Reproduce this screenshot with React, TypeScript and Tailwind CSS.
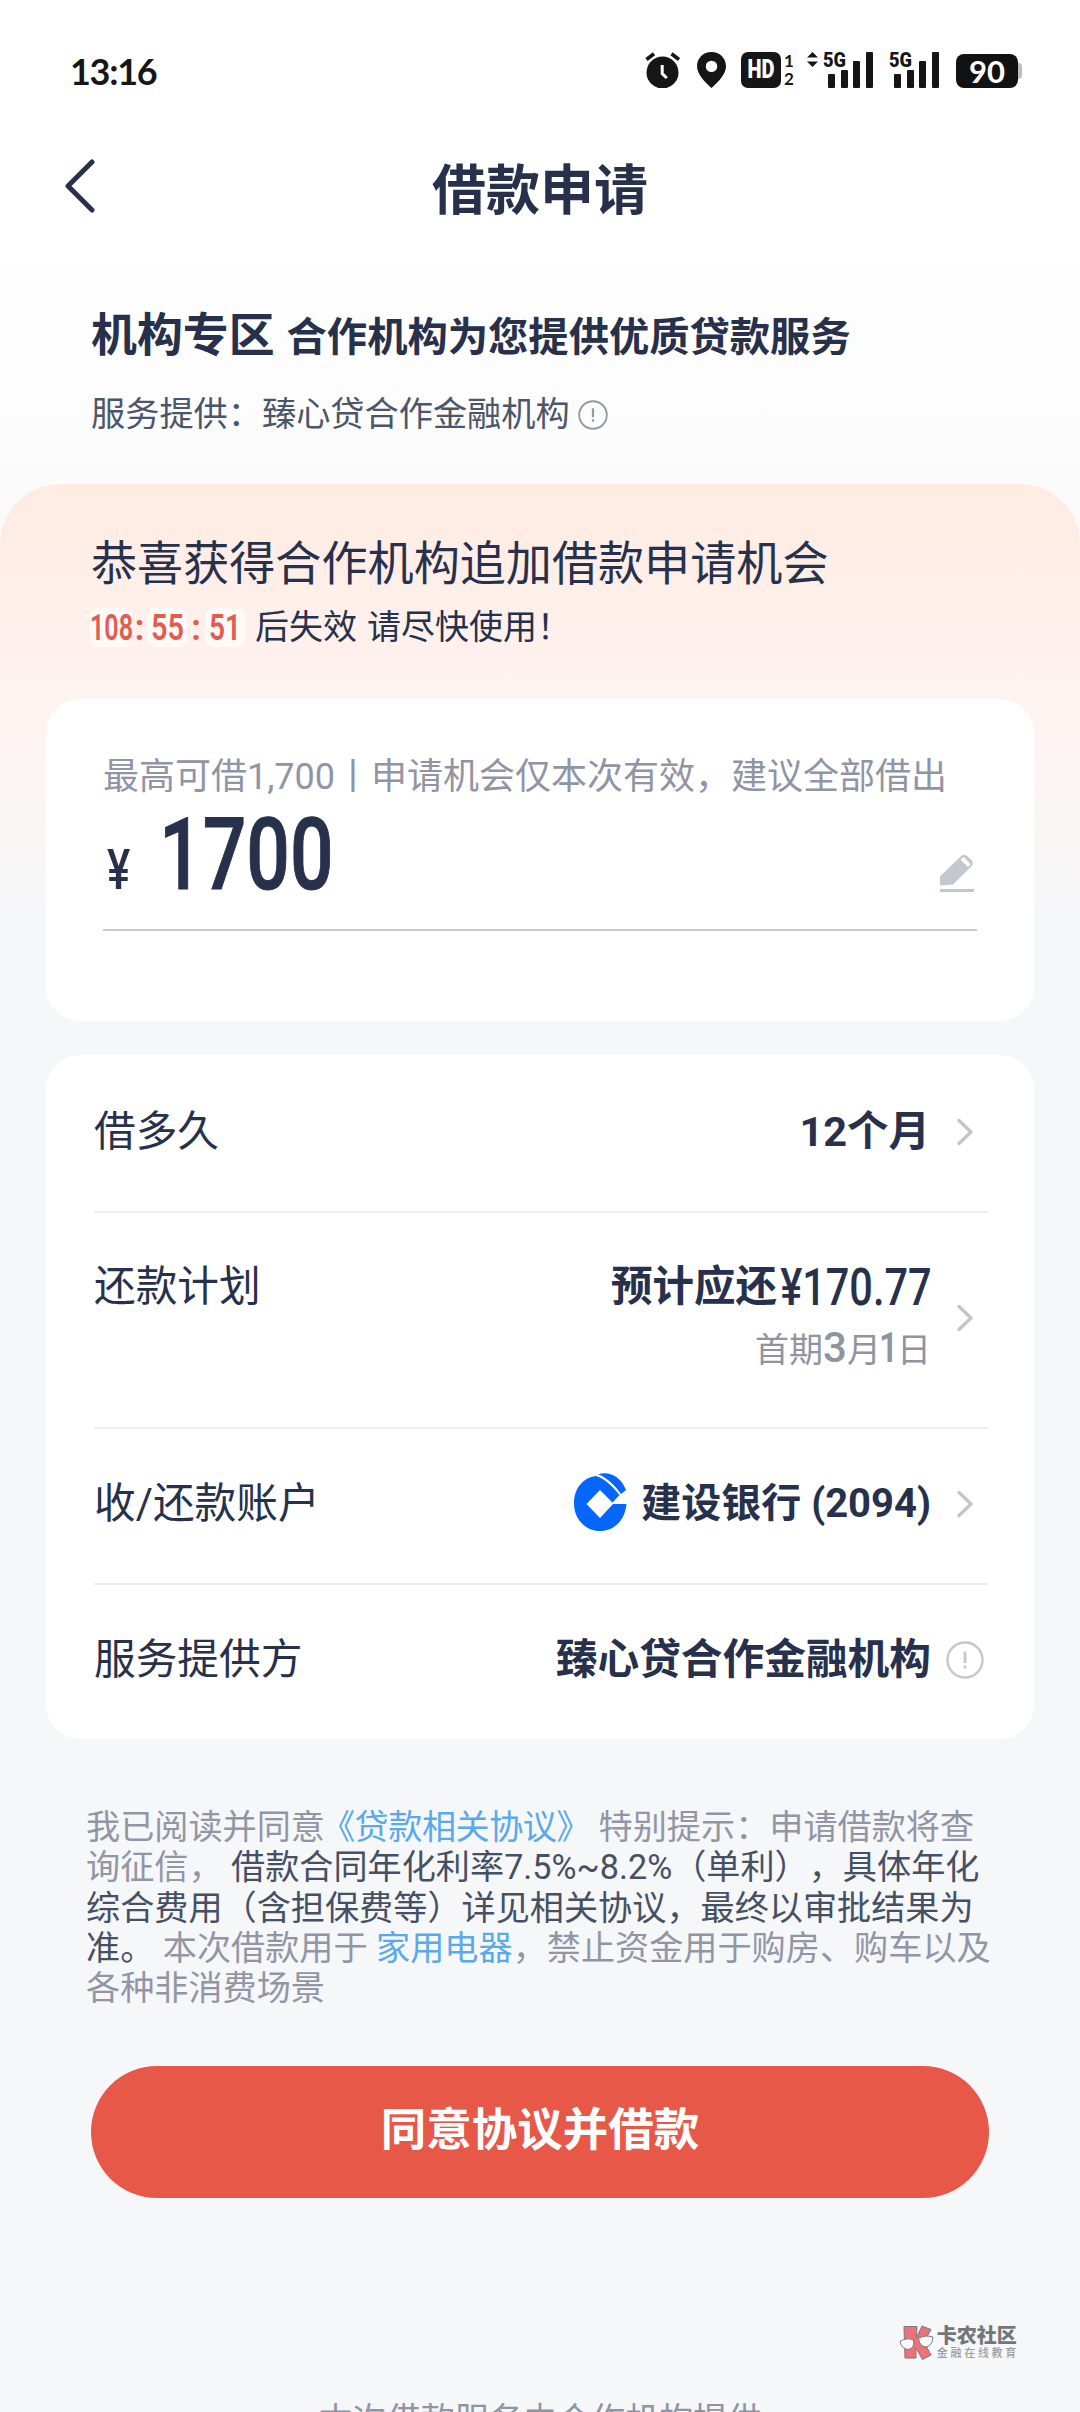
import type { ReactNode } from "react";
import clsx from "clsx";

const BARS = [
  { x: 5, y: 22 },
  { x: 18, y: 18 },
  { x: 30, y: 9 },
  { x: 43, y: 0 },
];

function AlarmIcon() {
  return (
    <svg width="36" height="36" viewBox="0 0 36 36" fill="#161616">
      <circle cx="17.5" cy="20.5" r="16" />
      <path d="M1.5 7.5 9 1.8M34 7.5 26.500 1.800" stroke="#161616" strokeWidth="3.600" />
      <path d="M17.200 13v8.500l4.600 4.500" stroke="#fff" strokeWidth="3" fill="none" />
    </svg>
  );
}

function PinIcon() {
  return (
    <svg width="30" height="36" viewBox="0 0 30 36" fill="#161616">
      <path
        fillRule="evenodd"
        d="M14.500 0C6.300 0 0 6.200 0 14c0 8.500 8 16 14.500 22C21 30 29 22.500 29 14 29 6.200 22.700 0 14.500 0Zm0 8.700a5.700 5.700 0 1 1 0 11.400 5.700 5.700 0 0 1 0-11.400Z"
      />
    </svg>
  );
}

function Signal() {
  return (
    <svg width="51" height="36" viewBox="0 0 51 36" fill="#161616" className="overflow-visible">
      <text x="0" y="14.500" fontSize="20.500" fontWeight="900" textLength="23" lengthAdjust="spacingAndGlyphs" className="font-['Roboto',sans-serif]">
        5G
      </text>
      {BARS.map((b) => (
        <rect key={b.x} x={b.x} y={b.y} width="7" height={36 - b.y} rx="1" />
      ))}
    </svg>
  );
}

function StatusBar() {
  return (
    <div className="flex h-[140px] items-start justify-between pt-[52px] pr-[58px] pl-[70px] text-[#161616]">
      <span className="font-['Lato','Noto_Sans_CJK_SC',sans-serif] text-[36px] leading-[38px] font-bold tracking-[-1.3px]">
        13:16
      </span>
      <div className="flex h-9 items-start">
        <AlarmIcon />
        <span className="w-4" />
        <PinIcon />
        <span className="w-3.5" />
        <div className="flex h-9 w-10 items-center justify-center rounded-[7px] bg-[#161616] font-['Roboto',sans-serif] text-[25px] font-black text-white">
          <span className="scale-x-[0.8]">HD</span>
        </div>
        <div className="ml-[3px] flex h-9 w-[10px] flex-col justify-between font-['Lato',sans-serif] text-[17px] leading-[18px] font-bold">
          <span>1</span>
          <span>2</span>
        </div>
        <svg width="11" height="15" viewBox="0 0 11 15" fill="#161616" className="mr-[5px] ml-[13px]">
          <path d="M5.500 0 11 5.500H0ZM5.500 15 11 9.500H0Z" />
        </svg>
        <Signal />
        <span className="w-[15px]" />
        <Signal />
        <span className="w-4" />
        <div className="mt-0.5 flex items-center">
          <div className="flex h-[34px] w-[62px] items-center justify-center rounded-[8px] bg-[#121212] font-['Lato',sans-serif] text-[31px] font-bold text-white">
            90
          </div>
          <span className="h-4 w-1 rounded-r-[4px] bg-[#bdbdbd]" />
        </div>
      </div>
    </div>
  );
}

function InfoIcon({ size, color }: { size: number; color: string }) {
  return (
    <svg width={size} height={size} viewBox="0 0 38 38" fill="none" stroke={color} strokeWidth="2.400">
      <circle cx="19" cy="19" r="17.500" />
      <path d="M19 10.500v11.500M19 24.500v3" strokeWidth="2.800" />
    </svg>
  );
}

function Chevron() {
  return (
    <svg width="16" height="28" viewBox="0 0 16 28" fill="none" stroke="#c3c5c9" strokeWidth="3.300" strokeLinecap="round" strokeLinejoin="round">
      <path d="M2 2.500 14 14 2 25.500" />
    </svg>
  );
}

function CcbLogo() {
  return (
    <svg width="53" height="58" viewBox="0 0 53 58">
      <path
        fill="#0466fb"
        d="M22 3C9 4.500 0 15.500 0 30.500 0 46 11.500 58 26 58c14 0 25-10.500 26.500-27H39L26 45 12.500 31 26 17l12.500 12.500 7-7.500C40 15 31 5.500 22 3Z"
      />
      <path fill="#0466fb" d="M24 1.200C36-2.500 47.500 4.500 52 17l-5 4C41.500 13 32.500 4 24 1.200Z" />
    </svg>
  );
}

function PencilIcon() {
  return (
    <svg width="35" height="40" viewBox="0 0 35 40">
      <path fill="#c5c6cf" d="M0 31V23.500L21 3.200c2-2 4.500-2 6.500 0l3.800 3.700c2 2 2 4.500 0 6.500L13 31.500 2.500 32.500Q0 33 0 31Z" />
      <path fill="#fff" d="m20.500 6.500 3.200-2.500 6.800 7-2.300 3.300Z" />
      <path fill="#c5c6cf" d="M0 36h34v3H0Z" />
    </svg>
  );
}

function Watermark() {
  return (
    <div className="flex items-start gap-[3px]">
      <svg width="35" height="36" viewBox="0 0 35 36" stroke="#7d7a80" strokeWidth="1">
        <path fill="#ee7078" d="M5 1.500h13l-.500 11L23 1l9 3.500L25 17l7 13-8.500 4.500L17 23v10H6Z" />
        <path fill="#f8fafb" d="M1 16.500q7-4.500 13.500-1.500 1.500 8-5 9.500-7-.500-8.500-8ZM19.500 13.500q6-4 14.500-1.500-.500 8.500-7 10-6.500-.500-7.500-8.500Z" />
      </svg>
      <div className="flex flex-col pt-px">
        <span className="text-[20px] leading-5 font-black text-[#747678]">卡农社区</span>
        <span className="mt-px text-[11px] leading-[14px] font-medium tracking-[2.700px] whitespace-nowrap text-[#9a9c9f]">金融在线教育</span>
      </div>
    </div>
  );
}

function Row({ label, className, children }: { label: string; className: string; children: ReactNode }) {
  return (
    <div className={clsx("flex justify-between", className)}>
      <span className="text-[41.700px] leading-[60px]">{label}</span>
      {children}
    </div>
  );
}

const DIN = "font-['Roboto','Noto_Sans_CJK_SC',sans-serif]";

export default function App() {
  return (
    <div className="flex h-[2412px] w-[1080px] flex-col overflow-hidden bg-[#f5f7f9] font-['Roboto','Noto_Sans_CJK_SC',sans-serif] text-[#28314b]">
      <div className="h-[484px] shrink-0 bg-linear-to-b from-white from-45% to-[#fbfbfc]">
        <StatusBar />

        {/* Title bar */}
        <header className="flex h-[100px] items-center justify-between px-[65px]">
          <svg width="30" height="54" viewBox="0 0 30 54" fill="none" stroke="#28314b" strokeWidth="5" strokeLinecap="round" strokeLinejoin="round" className="-mt-2">
            <path d="M27 3 3 27l24 24" />
          </svg>
          <h1 className="pt-1 text-[54px] leading-[80px] font-bold">借款申请</h1>
          <span className="w-[30px]" />
        </header>

        <div className="px-[91px] pt-[61px]">
          <div className="flex items-baseline gap-[12px] leading-[68px] font-bold whitespace-nowrap">
            <span className="text-[45.900px]">机构专区</span>
            <span className="text-[40.300px]">合作机构为您提供优质贷款服务</span>
          </div>
          <div className="mt-[16px] flex items-center text-[34.200px] leading-[52px] text-[#4b566a]">
            服务提供：臻心贷合作金融机构
            <span className="mt-px ml-2">
              <InfoIcon size={30} color="#9699a0" />
            </span>
          </div>
        </div>
      </div>

      <div className="flex h-[1928px] flex-col bg-[#fbfbfc]">
        <div className="flex grow flex-col rounded-t-[60px] bg-linear-to-b from-[#ffebe2] via-[#fef3f0] via-[210px] to-[#f5f7f9] to-[450px] px-[46px]">
          {/* Offer */}
          <div className="h-[215px] px-[45px] pt-[47px] whitespace-nowrap">
            <p className="text-[46.100px] leading-[66px]">恭喜获得合作机构追加借款申请机会</p>
            <div className="mt-[5px] flex items-center text-[34px] leading-[50px]">
              <div className={clsx("-ml-px flex w-[165px] items-center text-[37px] leading-[39px] font-semibold text-[#e25c50]", DIN)}>
                <span className="w-[42px] rounded-lg bg-[#fffaf8]">
                  <span className="inline-block w-[42px] origin-left scale-x-[0.68]">108</span>
                </span>
                <span className="w-[15px] text-center">:</span>
                <span className="w-[40px] rounded-lg bg-[#fffaf8] pl-1">
                  <span className="inline-block w-[33px] origin-left scale-x-[0.78]">55</span>
                </span>
                <span className="w-[18px] text-center">:</span>
                <span className="w-[40px] rounded-lg bg-[#fffaf8] pl-1">
                  <span className="inline-block w-[33px] origin-left scale-x-[0.76]">51</span>
                </span>
              </div>
              <span>后失效</span>
              <span className="ml-[10px]">请尽快使用！</span>
            </div>
          </div>

          {/* Amount */}
          <section className="h-[322px] rounded-[34px] bg-white px-[57px] pt-[52px]">
            <p className="text-[36px] leading-[52px] whitespace-nowrap text-[#9094a5]">
              最高可借1,700丨申请机会仅本次有效，建议全部借出
            </p>
            <div className="flex h-[128px] items-end justify-between border-b-2 border-[#c9cacf]">
              <div className="flex items-baseline pb-[22px] leading-[74px] font-medium">
                <span className={clsx("w-[56px] pl-1 text-[56px]", DIN)}>
                  <span className="inline-block origin-left scale-x-[0.78]">¥</span>
                </span>
                <span className={clsx("inline-block w-[176px] origin-left scale-x-[0.76] text-[101px] [-webkit-text-stroke:1px]", DIN)}>1700</span>
              </div>
              <span className="mr-0.5 pb-[36px]"><PencilIcon /></span>
            </div>
          </section>

          {/* Loan details */}
          <section className="mt-[34px] h-[684px] rounded-[34px] bg-white pr-[46px] pl-12">
            <Row label="借多久" className="h-[158px] border-b-2 border-[#ededf0] pt-[47px]">
              <div className="flex h-[60px] items-center pr-[15px] text-[41.500px] font-bold">
                12个月
                <span className="ml-[27px]"><Chevron /></span>
              </div>
            </Row>
            <Row label="还款计划" className="h-[216px] border-b-2 border-[#ededf0] pt-[44px]">
              <div className="flex pr-[15px]">
                <div className="flex w-[327px] flex-col items-end">
                  <div className="flex w-full text-[41.500px] leading-[60px] font-bold">
                    <span>预计应还</span>
                    <span className={clsx("inline-block w-[155px] origin-left scale-x-[0.79] pl-1 text-[52.500px] font-medium", DIN)}>
                      ¥170.77
                    </span>
                  </div>
                  <div className="mt-[6px] mr-[7px] flex items-baseline text-[34px] leading-[50px] text-[#9094a0]">
                    <span>首期</span>
                    <span className="w-[24px] text-center text-[42px] font-medium">3</span>
                    <span>月</span>
                    <span className="-ml-0.5 w-[18px] text-[42px] font-semibold">
                      <span className="inline-block w-[18px] origin-left scale-x-[0.8]">1</span>
                    </span>
                    <span>日</span>
                  </div>
                </div>
                <span className="mt-[47px] ml-[19px]"><Chevron /></span>
              </div>
            </Row>
            <Row label="收/还款账户" className="h-[156px] border-b-2 border-[#ededf0] pt-[45px]">
              <div className="flex h-[60px] items-center pr-[15px] text-[40px] font-bold">
                <span className="-mt-1 mr-[14px]"><CcbLogo /></span>
                建设银行 (2094)
                <span className="ml-[26px]"><Chevron /></span>
              </div>
            </Row>
            <Row label="服务提供方" className="h-[154px] pt-[45px]">
              <div className="flex h-[60px] items-center pr-1 text-[41.700px] font-bold">
                臻心贷合作金融机构
                <span className="ml-[15px]"><InfoIcon size={38} color="#c6c7ca" /></span>
              </div>
            </Row>
          </section>

          {/* Agreement */}
          <div className="mt-[68px] pl-10 text-[34.150px] leading-[40.300px] whitespace-nowrap text-[#9296a4] [text-spacing-trim:space-all]">
            <p>
              我已阅读并同意<span className="-ml-1 tracking-[-0.500px] text-[#5aa9ea]">《贷款相关协议》</span> 特别提示：申请借款将查
            </p>
            <p>
              询征信， <span className="text-[#465064]">借款合同年化利率7.5%~8.2%（单利），具体年化</span>
            </p>
            <p className="text-[#465064]">综合费用（含担保费等）详见相关协议，最终以审批结果为</p>
            <p>
              <span className="text-[#465064]">准。</span> 本次借款用于 <span className="text-[#5aa9ea]">家用电器</span>，禁止资金用于购房、购车以及
            </p>
            <p>各种非消费场景</p>
          </div>

          <button className="mx-[45px] mt-[58px] h-[132px] shrink-0 rounded-full bg-[#e75848] pb-0.5 text-[45.500px] leading-[60px] font-bold text-white">
            同意协议并借款
          </button>

          <div className="mt-[127px] mr-[15px] flex justify-end">
            <Watermark />
          </div>
          <p className="mt-[34px] text-center text-[34.100px] leading-[50px] whitespace-nowrap text-[#9094a5]">
            本次借款服务由合作机构提供
          </p>
        </div>
      </div>
    </div>
  );
}
